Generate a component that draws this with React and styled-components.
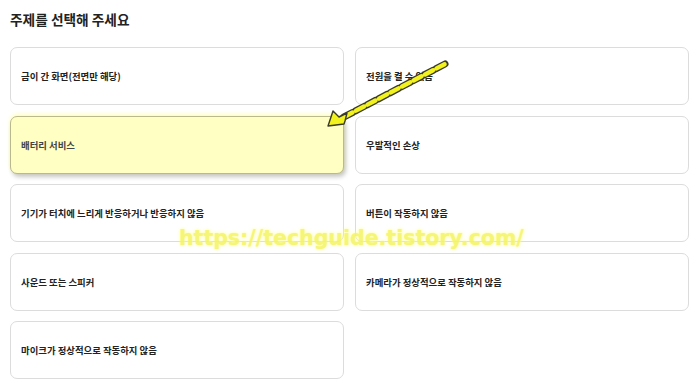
import React from "react";
import styled, { createGlobalStyle } from "styled-components";

const GlobalStyle = createGlobalStyle`
  body {
    margin: 0;
    background: #ffffff;
    font-family: "Noto Sans CJK KR", "Noto Sans", sans-serif;
  }
`;

const SPage = styled.div`
  position: relative;
  width: 700px;
  height: 391px;
  padding: 10px 11px 0 10px;
  box-sizing: border-box;
  overflow: hidden;
`;

const STitle = styled.h2`
  margin: 0;
  font-size: 13.7px;
  line-height: 18px;
  font-weight: 700;
  color: #222;
`;

const SGrid = styled.div`
  display: grid;
  grid-template-columns: 334px 334px;
  column-gap: 11px;
  row-gap: 10.5px;
  margin-top: 19px;
`;

const SCard = styled.div`
  display: flex;
  align-items: center;
  height: 58px;
  box-sizing: border-box;
  padding: 0 10px;
  border: 1px solid ${(p) => (p.$active ? "#b9b98c" : "#dcdcdc")};
  border-radius: 7px;
  background: ${(p) => (p.$active ? "#ffffc4" : "#ffffff")};
  box-shadow: ${(p) =>
    p.$active ? "2px 3px 4px rgba(0,0,0,0.22), 0 -2px 4px rgba(255,255,150,0.6)" : "none"};
  font-size: 9.4px;
  font-weight: 700;
  color: ${(p) => (p.$active ? "#444" : "#222")};
`;

const SWatermark = styled.div`
  position: absolute;
  left: 179px;
  top: 226px;
  font-family: "DejaVu Sans", sans-serif;
  font-weight: 700;
  font-size: 20.5px;
  color: #f4f46a;
  text-shadow: 0 0 2px rgba(255, 255, 120, 0.9), 0 0 4px rgba(255, 255, 160, 0.8);
  opacity: 0.9;
  pointer-events: none;
`;

const SArrow = styled.svg`
  position: absolute;
  left: 0;
  top: 0;
  pointer-events: none;
`;

const topics = [
  "금이 간 화면(전면만 해당)",
  "전원을 켤 수 없음",
  "배터리 서비스",
  "우발적인 손상",
  "기기가 터치에 느리게 반응하거나 반응하지 않음",
  "버튼이 작동하지 않음",
  "사운드 또는 스피커",
  "카메라가 정상적으로 작동하지 않음",
  "마이크가 정상적으로 작동하지 않음",
];

export default function App() {
  return (
    <>
      <GlobalStyle />
      <SPage>
        <STitle>주제를 선택해 주세요</STitle>
        <SGrid>
          {topics.map((t) => (
            <SCard key={t} $active={t === "배터리 서비스"}>
              {t}
            </SCard>
          ))}
        </SGrid>
        <SWatermark>https://techguide.tistory.com/</SWatermark>
        <SArrow width="700" height="391">
          <line
            x1="445"
            y1="64"
            x2="342"
            y2="118"
            stroke="#3a3a2a"
            strokeWidth="7"
            strokeDasharray="10 3"
            strokeLinecap="round"
          />
          <line
            x1="445"
            y1="64"
            x2="342"
            y2="118"
            stroke="#f2f21e"
            strokeWidth="4.4"
            strokeDasharray="9 4"
            strokeDashoffset="-0.5"
            strokeLinecap="round"
          />
          <polygon
            points="328,126 333,111 339,117 347,113 345,121 344,124"
            fill="#f2f21e"
            stroke="#3a3a2a"
            strokeWidth="1.4"
            strokeLinejoin="round"
          />
        </SArrow>
      </SPage>
    </>
  );
}
